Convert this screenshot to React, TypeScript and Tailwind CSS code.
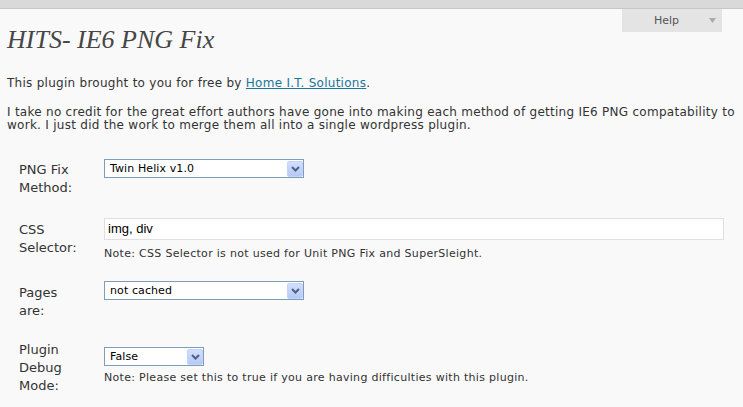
function FakeSelect({ value, width }: { value: string; width: string }) {
  return (
    <div
      className={`${width} flex h-[19px] items-center border border-[#7f9db9] bg-white`}
    >
      <span className="pl-[5px] font-['Tahoma','DejaVu_Sans',sans-serif] text-[11px] leading-none tracking-[0.1px] text-black">
        {value}
      </span>
      <span className="ml-auto mt-px flex h-[16px] w-[16px] items-center justify-center self-start rounded-[2px] border border-[#c3d3fd] bg-gradient-to-b from-[#d2defd] to-[#b5c8f6]">
        <svg width="9" height="6" viewBox="0 0 9 6" className="text-[#4d6185]">
          <path d="M1 1 L4.5 4.5 L8 1" fill="none" stroke="currentColor" strokeWidth="2" />
        </svg>
      </span>
    </div>
  )
}

function Row({
  label,
  labelClass = "",
  fieldClass = "",
  children,
}: {
  label: string[]
  labelClass?: string
  fieldClass?: string
  children: React.ReactNode
}) {
  return (
    <div className="flex items-start">
      <div className={`w-[97px] shrink-0 pl-[12px] text-[13px] leading-[18px] tracking-normal ${labelClass}`}>
        {label.map((line) => (
          <div key={line}>{line}</div>
        ))}
      </div>
      <div className={fieldClass}>{children}</div>
    </div>
  )
}

export default function App() {
  return (
    <div className="min-h-[407px] bg-[#f9f9f9] font-['Verdana','DejaVu_Sans',sans-serif] text-[12px] tracking-[0.27px] text-[#333]">
      {/* top admin strip */}
      <div className="h-[9px] border-b border-[#c6c6c6] bg-[#d9d9d9]" />

      <div className="pl-[7px] pr-[2px]">
        {/* Help tab */}
        <div className="float-right mr-[19px] flex h-[23px] w-[100px] items-center bg-[#e4e4e4] text-[11px] leading-[23px] tracking-normal text-[#555]">
          <span className="ml-[32px]">Help</span>
          <svg width="7" height="5" viewBox="0 0 7 5" className="ml-auto mr-[6px]">
            <polygon points="0,0 7,0 3.5,5" fill="#aaa" />
          </svg>
        </div>

        <h2 className="pt-[18px] font-['Georgia','Liberation_Serif',serif] text-[26px] italic leading-[26px] tracking-normal text-[#464646]">
          HITS- IE6 PNG Fix
        </h2>

        <p className="mt-[24px] leading-[13px]">
          This plugin brought to you for free by{" "}
          <a href="#" className="text-[#21759b] underline">
            Home I.T. Solutions
          </a>
          .
        </p>
        <p className="mt-[16px] leading-[13px]">
          I take no credit for the great effort authors have gone into making each method of
          getting IE6 PNG compatability to work. I just did the work to merge them all into a
          single wordpress plugin.
        </p>

        <div className="mt-[27px] flex flex-col gap-[21px]">
          <Row label={["PNG Fix", "Method:"]} labelClass="mt-[2px]">
            <FakeSelect value="Twin Helix v1.0" width="w-[200px]" />
          </Row>

          <Row label={["CSS", "Selector:"]} labelClass="mt-[3px]">
            <div className="flex h-[22px] w-[620px] items-center border border-[#dfdfdf] bg-white pl-[3px] font-['Tahoma','Liberation_Sans',sans-serif] text-[13px] tracking-normal text-black">
              img, div
            </div>
            <div className="mt-[7px] text-[11px] leading-[13px] tracking-[0.3px]">
              Note: CSS Selector is not used for Unit PNG Fix and SuperSleight.
            </div>
          </Row>

          <Row label={["Pages", "are:"]} labelClass="mt-[3px]">
            <FakeSelect value="not cached" width="w-[200px]" />
          </Row>

          <Row label={["Plugin", "Debug", "Mode:"]} fieldClass="mt-[6px]">
            <FakeSelect value="False" width="w-[100px]" />
            <div className="mt-[5px] text-[11px] leading-[13px] tracking-[0.3px]">
              Note: Please set this to true if you are having difficulties with this plugin.
            </div>
          </Row>
        </div>
      </div>
    </div>
  )
}
